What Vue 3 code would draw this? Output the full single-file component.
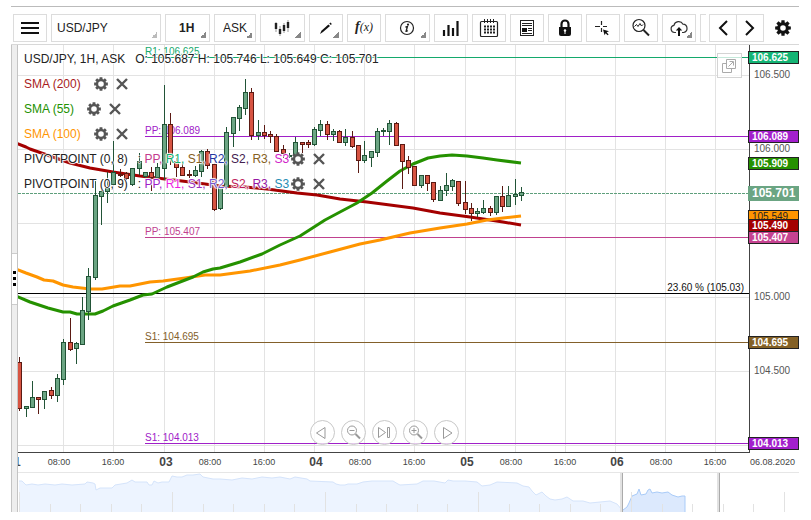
<script setup>
import { ref } from 'vue'

const pair = ref('USD/JPY')
const period = ref('1H')
const side = ref('ASK')

// Outline of a toothed wheel centred on 0,0 with a round hole
function gearPath(outer, inner, hole) {
  const pts = []
  for (let i = 0; i < 8; i++) {
    const a = (i * Math.PI) / 4
    const steps = [[-0.3, inner], [-0.2, outer], [0.2, outer], [0.3, inner]]
    for (const [d, r] of steps) {
      pts.push(`${(r * Math.sin(a + d)).toFixed(2)} ${(-r * Math.cos(a + d)).toFixed(2)}`)
    }
  }
  return `M${pts.join('L')}ZM${hole} 0A${hole} ${hole} 0 1 0 ${-hole} 0A${hole} ${hole} 0 1 0 ${hole} 0Z`
}
const bigGear = gearPath(8, 5.8, 2.8)
const smallGear = gearPath(7, 5.2, 2.8)

const indicators = [
  { name: 'SMA (200)', color: '#a81c1c' },
  { name: 'SMA (55)', color: '#229100' },
  { name: 'SMA (100)', color: '#ff9500' },
]
const pivots = [
  {
    name: 'PIVOTPOINT (0, 8)',
    parts: [['PP', '#c43b8e'], ['R1', '#12b070'], ['S1', '#856022'], ['R2', '#2536a0'], ['S2', '#43204f'], ['R3', '#856022'], ['S3', '#d020c8']],
  },
  {
    name: 'PIVOTPOINT (0, 9)',
    parts: [['PP', '#9f1fc8'], ['R1', '#ee1fe2'], ['S1', '#9b2fc0'], ['R2', '#7458cc'], ['S2', '#c01c5c'], ['R3', '#9618a4'], ['S3', '#1f8cb4']],
  },
]

const gridX = [63, 113, 164, 214, 264, 314, 364, 414, 465, 515, 565, 615, 665, 715]
const gridY = [75, 149, 223, 297, 371, 445]

const levels = [
  { y: 57, color: '#14a96c', label: 'R1: 106.625' },
  { y: 136, color: '#a020c8', label: 'PP: 106.089' },
  { y: 237, color: '#c0418f', label: 'PP: 105.407' },
  { y: 342, color: '#83602a', label: 'S1: 104.695' },
  { y: 443, color: '#a020c8', label: 'S1: 104.013' },
]
const priceTicks = [[75, '106.500'], [149, '106.000'], [297, '105.000'], [371, '104.500']]
const tags = [
  { y: 51, text: '106.625', fill: '#14b474', ink: '#fff' },
  { y: 130, text: '106.089', fill: '#a21fcc', ink: '#fff' },
  { y: 157, text: '105.909', fill: '#259100', ink: '#fff' },
  { y: 210, text: '105.549', fill: '#ff9500', ink: '#222', plain: true },
  { y: 219, text: '105.490', fill: '#a40000', ink: '#fff' },
  { y: 231, text: '105.407', fill: '#c64391', ink: '#fff' },
  { y: 336, text: '104.695', fill: '#846126', ink: '#fff' },
  { y: 437, text: '104.013', fill: '#a21fcc', ink: '#fff' },
]
const days = [[14, '31'], [166, '03'], [316, '04'], [467, '05'], [617, '06']]
const hours = [
  [59, '08:00'], [113, '16:00'], [210, '08:00'], [264, '16:00'], [360, '08:00'],
  [414, '16:00'], [511, '08:00'], [565, '16:00'], [661, '08:00'], [715, '16:00'],
]

const sma200 = '16,143 26,147 30,149 50,156 70,163 90,168 113,172 140,176 165,179 190,182 220,186 245,187 267,189 297,193 317,195 340,199 367,202 390,205 413,208 440,213 470,217 490,220 503,222 521,225'
const sma55 = '16,296 30,302 48,308 63,312 70,312 77,314 95,314 103,311 113,306 130,300 143,295 152,294 167,287 193,277 203,272 213,269 220,268 240,262 262,254 280,245 300,236 325,220 340,212 357,203 372,193 387,181 400,171 413,164 428,158 440,156 452,155 467,156 483,158 497,160 521,163'
const sma100 = '16,269 26,273 37,277 44,280 53,281 63,285 73,287 90,289 102,289 120,286 130,286 150,282 163,281 185,278 205,275 220,275 250,271 280,265 300,260 330,252 360,244 380,240 410,233 440,228 467,224 487,220 503,218 521,216'

// x, high, low, body top, body bottom, rising
const candles = [
  [19, 357, 411, 362, 409, 0], [26, 406, 417, 406, 409, 1], [32, 381, 408, 397, 408, 1],
  [38, 397, 414, 397, 400, 0], [44, 391, 409, 391, 400, 1], [51, 387, 399, 390, 396, 0],
  [57, 374, 402, 378, 396, 1], [63, 339, 385, 342, 380, 1], [70, 318, 351, 342, 350, 0],
  [76, 342, 364, 343, 349, 1], [82, 297, 345, 310, 345, 1], [88, 268, 320, 276, 312, 1],
  [95, 181, 280, 195, 278, 1], [101, 188, 225, 191, 197, 1], [107, 172, 203, 188, 192, 1],
  [113, 141, 185, 172, 185, 1], [120, 169, 177, 174, 176, 0], [126, 172, 180, 173, 179, 0],
  [132, 168, 186, 168, 185, 1], [139, 153, 175, 161, 169, 1], [145, 172, 178, 172, 177, 1],
  [151, 167, 191, 172, 178, 0], [157, 163, 178, 167, 178, 1], [164, 85, 180, 124, 169, 1],
  [170, 113, 165, 124, 160, 0], [176, 158, 177, 161, 168, 0], [182, 162, 176, 167, 176, 0],
  [189, 170, 178, 174, 176, 0], [195, 166, 177, 170, 176, 1], [201, 150, 177, 151, 172, 1],
  [207, 149, 169, 151, 166, 0], [214, 164, 211, 164, 210, 0], [220, 187, 210, 187, 209, 1],
  [226, 127, 189, 132, 187, 1], [233, 117, 147, 117, 134, 1], [239, 105, 131, 107, 119, 1],
  [245, 79, 115, 92, 109, 1], [251, 88, 140, 92, 136, 0], [258, 120, 140, 132, 136, 1],
  [264, 125, 139, 132, 136, 0], [270, 131, 143, 134, 137, 0], [276, 134, 152, 136, 152, 0],
  [283, 145, 158, 149, 154, 0], [289, 153, 158, 155, 157, 1], [295, 137, 156, 142, 156, 1],
  [302, 142, 153, 142, 145, 0], [308, 140, 148, 142, 145, 0], [314, 127, 146, 129, 145, 1],
  [320, 120, 136, 124, 131, 1], [327, 121, 140, 124, 135, 0], [333, 129, 141, 131, 135, 1],
  [339, 130, 143, 131, 143, 0], [345, 129, 146, 137, 143, 1], [352, 131, 148, 137, 147, 0],
  [358, 145, 173, 145, 161, 0], [364, 141, 163, 155, 161, 1], [371, 151, 167, 151, 158, 1],
  [377, 128, 157, 131, 153, 1], [383, 128, 136, 130, 132, 1], [389, 120, 145, 123, 132, 1],
  [396, 122, 146, 123, 146, 0], [402, 144, 189, 144, 162, 0], [408, 156, 174, 160, 168, 0],
  [414, 166, 186, 166, 186, 0], [421, 175, 188, 175, 186, 1], [427, 175, 191, 175, 184, 0],
  [433, 182, 202, 182, 200, 0], [440, 186, 201, 190, 201, 1], [446, 173, 196, 185, 191, 1],
  [452, 179, 191, 180, 187, 1], [458, 181, 206, 181, 204, 0], [465, 181, 214, 202, 210, 0],
  [471, 203, 221, 208, 214, 0], [477, 208, 217, 211, 214, 1], [483, 200, 214, 208, 213, 1],
  [490, 206, 216, 208, 213, 0], [496, 196, 215, 196, 213, 1], [502, 186, 212, 196, 207, 0],
  [508, 186, 207, 195, 207, 1], [515, 179, 205, 194, 197, 1], [521, 187, 201, 192, 196, 1],
]

const past = '19,481 22,481 24,483 26,485 32,484 38,485 45,484 55,485 62,484 72,485 85,484 87,482 93,483 95,484 96,490 100,488 112,488 115,485 121,484 127,483 132,480 135,482 147,482 149,485 152,485 154,481 158,483 162,482 169,482 172,476 177,477 182,477 187,475 193,475 200,474 203,477 213,479 220,479 232,480 242,478 252,479 262,477 272,478 280,477 290,479 295,477 307,479 310,481 333,482 336,484 340,485 345,485 348,484 357,484 363,482 372,481 393,481 398,484 400,485 417,484 423,481 434,481 445,483 448,480 453,481 465,481 477,482 482,486 490,485 497,482 517,483 523,486 529,487 532,491 536,495 542,492 546,496 550,499 555,500 562,499 567,497 573,501 583,501 590,503 600,502 610,501 617,504 622,510'
const recent = '623,510 627,507 629,503 632,496 637,494 639,489 641,495 646,494 648,490 650,489 652,493 657,492 662,493 668,492 672,495 678,497 682,496 685,496'
const ticks = Array.from({ length: 26 }, (_, i) => ({ x: Math.round(19 + i * 30.6), tall: i % 5 === 0 }))
</script>

<template>
  <main class="app">
    <header class="toolbar">
      <div class="tools">
        <button class="tool" type="button" aria-label="Menu">
          <svg width="18" height="14" viewBox="0 0 18 14"><path d="M0 2h18M0 7h18M0 12h18" stroke="#111" stroke-width="2" /></svg>
        </button>
        <label class="pick pair">
          <select v-model="pair" aria-label="Instrument"><option>USD/JPY</option></select>
          <i class="corner pale"></i>
        </label>
        <label class="pick period">
          <select v-model="period" aria-label="Period"><option>1H</option></select>
          <i class="corner"></i>
        </label>
        <label class="pick side">
          <select v-model="side" aria-label="Price side"><option>ASK</option></select>
          <i class="corner"></i>
        </label>
        <button class="tool wide" type="button" aria-label="Chart type">
          <svg width="18" height="18" viewBox="0 0 18 18">
            <path d="M3 3v10M7 7v10M11 4v10M15 1v12" stroke="#999" />
            <path d="M3 4v6M7 10v5M11 6v6M15 3v6" stroke="#222" stroke-width="2.4" />
          </svg>
          <i class="corner"></i>
        </button>
        <button class="tool" type="button" aria-label="Draw">
          <svg width="14" height="14" viewBox="0 0 14 14">
            <path d="M1 13l1.400-3.200L9.400 3.400l1.600 1.600-7 6z" fill="#111" /><path d="M10.300 2.600l1.200-1 1.300 1.300-1 1.200z" fill="#111" />
          </svg>
          <i class="corner"></i>
        </button>
        <button class="tool fx" type="button" aria-label="Indicators"><b>f</b><span>(x)</span></button>
        <button class="tool wide" type="button" aria-label="Information">
          <svg width="16" height="16" viewBox="0 0 16 16">
            <circle cx="8" cy="8" r="6.5" fill="none" stroke="#222" stroke-width="1.2" />
            <circle cx="9" cy="4.6" r="1.1" fill="#222" />
            <path d="M6.400 7.100l2-.6-1.300 4.800q.5.3 1.600-.8" fill="none" stroke="#222" stroke-width="1.4" />
          </svg>
          <i class="corner"></i>
        </button>
        <button class="tool" type="button" aria-label="Statistics">
          <svg width="18" height="18" viewBox="0 0 18 18"><path d="M2 17v-6M6.500 17v-11M11 17v-8M15.500 17v-15" stroke="#111" stroke-width="2.2" /></svg>
        </button>
        <button class="tool" type="button" aria-label="Calendar">
          <svg width="20" height="20" viewBox="0 0 20 20">
            <rect x="1.500" y="3.500" width="17" height="15" rx="1" fill="none" stroke="#222" stroke-width="1.2" />
            <path d="M5.500 1v4M8.500 1v4M11.500 1v4M14.500 1v4" stroke="#222" />
            <path d="M5 8.500h11M5 11.500h11M5 14.500h11" stroke="#222" stroke-width="2" stroke-dasharray="2 1" />
          </svg>
        </button>
        <button class="tool" type="button" aria-label="News">
          <svg width="16" height="16" viewBox="0 0 16 16">
            <rect x="1.500" y=".5" width="13" height="15" fill="none" stroke="#222" />
            <path d="M3 3.500h10M3 5.500h10M9 8.500h4M9 10.500h4M3 13.500h10" stroke="#222" />
            <rect x="3" y="8" width="5" height="4" fill="#111" />
          </svg>
        </button>
        <button class="tool" type="button" aria-label="Lock">
          <svg width="16" height="18" viewBox="0 0 16 18">
            <path d="M4.500 8V5a3.500 3.500 0 0 1 7 0v3" fill="none" stroke="#111" stroke-width="2.200" />
            <path d="M2 8h12v7q0 2-2 2H4q-2 0-2-2z" fill="#111" />
            <circle cx="8" cy="11.500" r="1.200" fill="#fff" /><path d="M8 12v3" stroke="#fff" />
          </svg>
        </button>
        <button class="tool" type="button" aria-label="Crosshair">
          <svg width="18" height="18" viewBox="0 0 18 18">
            <path d="M1 7.500h5M9 7.500h4M7.500 2v4M7.500 9v4" stroke="#222" stroke-width="1.200" />
            <path d="M9 10.500l6 1.700-2.400 1 2 2.200-1 .8-2-2-1 2z" fill="#111" />
          </svg>
        </button>
        <button class="tool" type="button" aria-label="Analyse">
          <svg width="20" height="20" viewBox="0 0 20 20">
            <circle cx="8" cy="7.500" r="6" fill="none" stroke="#222" stroke-width="1.200" />
            <path d="M3.500 8.500l2-2 1.500 2 2-3 1.500 2.500 1.500-1.500" fill="none" stroke="#222" />
            <path d="M12.500 12l5.500 5.500" stroke="#222" stroke-width="2" />
          </svg>
        </button>
        <button class="tool" type="button" aria-label="Upload">
          <svg width="18" height="18" viewBox="0 0 18 18">
            <path d="M6 13.500H4.500a3.600 3.600 0 0 1-.6-7.100A4.900 4.900 0 0 1 13 5.200a4.200 4.200 0 0 1 .7 8.300H12" fill="none" stroke="#333" stroke-width="1.200" />
            <path d="M9 17V9" stroke="#111" stroke-width="2" /><path d="M5.800 11.500L9 8l3.200 3.500z" fill="#111" />
          </svg>
          <i class="corner"></i>
        </button>
        <button class="tool" type="button" aria-label="More tools"></button>
      </div>
      <nav class="pager">
        <button class="tool" type="button" aria-label="Previous tools">
          <svg width="10" height="16" viewBox="0 0 10 16"><path d="M9 1L2 8l7 7" fill="none" stroke="#111" stroke-width="2" /></svg>
        </button>
        <button class="tool" type="button" aria-label="Next tools">
          <svg width="10" height="16" viewBox="0 0 10 16"><path d="M1 1l7 7-7 7" fill="none" stroke="#111" stroke-width="2" /></svg>
        </button>
      </nav>
      <button class="settings" type="button" aria-label="Settings">
        <svg width="16" height="16" viewBox="-8 -8 16 16"><path :d="bigGear" fill="#111" fill-rule="evenodd" /></svg>
      </button>
    </header>

    <div class="body">
      <aside class="rail">
        <button class="grip" type="button" aria-label="Resize panel"><i></i><i></i><i></i></button>
      </aside>

      <section class="stage">
        <div class="chart">
          <svg class="plot" viewBox="18 45 781 427" role="img" aria-label="USD/JPY hourly candles">
            <g class="crisp">
              <path v-for="x in gridX" :key="'x' + x" :d="`M${x + 0.5} 45V452`" stroke="#e3e3e3" />
              <path v-for="y in gridY" :key="'y' + y" :d="`M18 ${y + 0.5}H749`" stroke="#e3e3e3" />
              <path d="M18 193.500H749" stroke="#5f9f7c" stroke-dasharray="3 1" />
              <path d="M18 293.500H749" stroke="#000" />
              <path v-for="l in levels" :key="l.label" :d="`M145 ${l.y + 0.5}H749`" :stroke="l.color" />
            </g>
            <text v-for="l in levels" :key="'t' + l.label" x="145" :y="l.y - 2" :fill="l.color">{{ l.label }}</text>
            <text x="744" y="291" text-anchor="end" fill="#111">23.60 % (105.03)</text>

            <g fill="none" stroke-width="3" stroke-linejoin="round">
              <polyline :points="sma200" stroke="#a40000" />
              <polyline :points="sma100" stroke="#ff9500" />
              <polyline :points="sma55" stroke="#259100" />
            </g>

            <g v-for="c in candles" :key="c[0]" class="crisp" :class="c[5] ? 'up' : 'down'">
              <path :d="`M${c[0] + 0.5} ${c[1]}V${c[2]}`" />
              <rect :x="c[0] - 1.5" :y="c[3] + 0.5" width="4" :height="c[4] - c[3] - 1" />
            </g>

            <path class="crisp" d="M18 452.500H749.500V45" fill="none" stroke="#444" />
            <text v-for="t in priceTicks" :key="t[1]" x="754" :y="t[0] + 3" fill="#555">{{ t[1] }}</text>
            <g v-for="t in tags" :key="t.y">
              <rect class="crisp" x="748.500" :y="t.y + 0.5" width="50" height="12" :fill="t.fill" stroke="#222" />
              <text x="752" :y="t.y + 10" :fill="t.ink" :class="{ strong: !t.plain }">{{ t.text }}</text>
            </g>
            <rect x="748" y="186" width="51" height="15" fill="#6ba583" />
            <text class="day" x="752" y="197" fill="#fff">105.701</text>

            <text v-for="d in days" :key="d[0]" class="day" :x="d[0]" y="466" text-anchor="middle" fill="#444">{{ d[1] }}</text>
            <text v-for="h in hours" :key="h[0]" class="hour" :x="h[0]" y="465" text-anchor="middle" fill="#444">{{ h[1] }}</text>
            <text class="hour" x="750" y="465" fill="#444">06.08.2020</text>
          </svg>

          <div class="legend">
            <p class="row"><span>USD/JPY, 1H, ASK</span><span>O: 105.687 H: 105.746 L: 105.649 C: 105.701</span></p>
            <p v-for="s in indicators" :key="s.name" class="row">
              <span class="name" :style="{ color: s.color }">{{ s.name }}</span>
              <button type="button" :aria-label="`Edit ${s.name}`"><svg width="14" height="14" viewBox="-7 -7 14 14"><path :d="smallGear" fill="#555" fill-rule="evenodd" /></svg></button>
              <button type="button" :aria-label="`Remove ${s.name}`"><svg width="12" height="12" viewBox="0 0 12 12"><path d="M1 1l10 10M11 1L1 11" stroke="#555" stroke-width="2.400" /></svg></button>
            </p>
            <p v-for="p in pivots" :key="p.name" class="row pivot">
              <span>{{ p.name }}</span>
              <span class="parts">: <template v-for="(t, i) in p.parts" :key="t[0]"><span :style="{ color: t[1] }">{{ t[0] }}{{ i < 6 ? ', ' : '' }}</span></template></span>
              <button type="button" :aria-label="`Edit ${p.name}`"><svg width="14" height="14" viewBox="-7 -7 14 14"><path :d="smallGear" fill="#555" fill-rule="evenodd" /></svg></button>
              <button type="button" :aria-label="`Remove ${p.name}`"><svg width="12" height="12" viewBox="0 0 12 12"><path d="M1 1l10 10M11 1L1 11" stroke="#555" stroke-width="2.400" /></svg></button>
            </p>
          </div>

          <div class="over corner-box">
            <button type="button" aria-label="Open in new window">
              <svg width="14" height="14" viewBox="0 0 14 14" fill="none" stroke="#aaa">
                <path d="M4.500.5h9v9h-9zM4 4.500H.5v9h9V10" /><path d="M6.500 7.500l4.500-4.500M7.500 2.500h4v4" />
              </svg>
            </button>
          </div>

          <div class="over zoomer">
            <button type="button" aria-label="Scroll back"><svg viewBox="0 0 23 23"><path d="M14 6.500v11L5.500 12z" /></svg></button>
            <button type="button" aria-label="Zoom out"><svg viewBox="0 0 23 23"><circle cx="10" cy="9.500" r="4.500" /><path d="M7.500 9.500h5" /><path class="thick" d="M13.500 13l4.500 4.500" /></svg></button>
            <button type="button" aria-label="Jump to latest"><svg viewBox="0 0 23 23"><path d="M5.500 6.500v10l7-5zM14.500 6.500h2v10h-2z" /></svg></button>
            <button type="button" aria-label="Zoom in"><svg viewBox="0 0 23 23"><circle cx="10" cy="9.500" r="4.500" /><path d="M7.500 9.500h5M10 7v5" /><path class="thick" d="M13.500 13l4.500 4.500" /></svg></button>
            <button type="button" aria-label="Scroll forward"><svg viewBox="0 0 23 23"><path d="M8.500 6.500v11L17 12z" /></svg></button>
          </div>
        </div>

        <svg class="plot" viewBox="18 472 781 40" role="img" aria-label="Overview">
          <polygon :points="`19,512 ${past} 622,512`" fill="#edf4ff" />
          <polyline :points="past" fill="none" stroke="#d5e4fb" stroke-width="1" />
          <polygon :points="`623,512 ${recent} 685,512`" fill="#dce9fd" />
          <polyline :points="`${recent} 685,512`" fill="none" stroke="#a9cbf8" stroke-width="1" />
          <g class="crisp">
            <path v-for="t in ticks" :key="t.x" :d="`M${t.x + 0.5} ${t.tall ? 492 : 504}V512`" stroke="#e2e2e2" />
            <path d="M18 472.500H799" stroke="#e6e6e6" />
            <path d="M621 473V512M718 473V512" stroke="#e2e2e2" stroke-width="2" />
            <path d="M622.500 473V512M719.500 473V512" stroke="#aaa" />
          </g>
        </svg>
      </section>
    </div>
  </main>
</template>

<style>
body {
  background: #fff;
}
</style>

<style scoped>
.app {
  padding: 6px 12px 0 11px;
  font-family: "Liberation Sans", Arial, sans-serif;
  font-size: 12px;
  color: #222;
}
.toolbar {
  display: flex;
  padding: 7px 0 2px 2px;
  border-top: 1px solid #bbb;
  border-bottom: 1px solid #d8d8d8;
}
.tools {
  display: flex;
  flex: 1;
  gap: 4px;
  min-width: 0;
  overflow: hidden;
}
button {
  display: flex;
  align-items: center;
  justify-content: center;
  padding: 0;
  border: 0;
  background: none;
  font: inherit;
  color: inherit;
  cursor: pointer;
}
.tool,
.pick {
  position: relative;
  flex: none;
  box-sizing: border-box;
  width: 34px;
  height: 28px;
  border: 1px solid #dcdcdc;
  background: #fff;
}
.wide {
  width: 45px;
  padding-right: 2px;
}
.pair {
  width: 110px;
}
.period {
  width: 45px;
}
.side {
  width: 42px;
}
select {
  appearance: none;
  width: 100%;
  height: 100%;
  padding: 0 0 0 5px;
  border: 0;
  background: none;
  font: inherit;
  color: #222;
}
.period select {
  padding-left: 13px;
  font-weight: bold;
}
.side select {
  padding-left: 8px;
}
.corner {
  position: absolute;
  right: 3px;
  bottom: 3px;
  width: 6px;
  height: 6px;
  background: linear-gradient(135deg, transparent 50%, #888 50%);
  pointer-events: none;
}
.pale {
  background: linear-gradient(135deg, transparent 50%, #bbb 50%);
}
.fx {
  align-items: baseline;
  font: italic 12px/24px "Liberation Serif", "Times New Roman", serif;
}
.fx b {
  font-size: 14px;
}
.pager {
  display: flex;
  margin-left: 3px;
}
.pager .tool {
  width: 28px;
}
.pager .tool + .tool {
  margin-left: -1px;
}
.settings {
  width: 35px;
  padding-left: 3px;
}
.body {
  display: flex;
}
.rail {
  display: flex;
  align-items: center;
  flex: none;
  box-sizing: border-box;
  width: 7px;
  border: solid #c4c4c4;
  border-width: 0 1px;
  background: #eee;
}
.grip {
  flex-direction: column;
  gap: 3px;
  width: 100%;
  height: 52px;
  border: solid #ccc;
  border-width: 1px 0;
  background: #fff;
}
.grip i {
  width: 3px;
  height: 3px;
  background: #000;
}
.stage {
  flex: 1;
  min-width: 0;
}
.chart {
  position: relative;
}
.plot {
  display: block;
  width: 100%;
  font-size: 10px;
}
.crisp {
  shape-rendering: crispEdges;
}
.strong {
  font-weight: bold;
}
.day {
  font-size: 12px;
  font-weight: bold;
}
.hour {
  font-size: 9px;
}
.up {
  fill: #6ba583;
  stroke: #225437;
}
.down {
  fill: #d75442;
  stroke: #5b1a13;
}
.legend {
  position: absolute;
  top: 1px;
  left: 6px;
  text-shadow: 0 0 1px #fff, 1px 0 1px #fff, -1px 0 1px #fff, 0 1px 1px #fff, 0 -1px 1px #fff;
}
.row {
  display: flex;
  align-items: center;
  gap: 8px;
  height: 25px;
  margin: 0;
  white-space: pre;
}
.row > span + span {
  margin-left: 2px;
}
.row .name {
  margin-right: 5px;
}
.pivot button:first-of-type {
  margin-left: -6px;
}
.over {
  position: absolute;
  left: 0;
  display: flex;
  box-sizing: border-box;
  width: 93.8%;
  pointer-events: none;
}
.over button {
  box-sizing: border-box;
  width: 25px;
  height: 25px;
  border: 1px solid #d4d4d4;
  background: rgba(255, 255, 255, 0.75);
  pointer-events: auto;
}
.corner-box {
  top: 8px;
  justify-content: flex-end;
  padding-right: 9px;
}
.zoomer {
  bottom: 27px;
  justify-content: center;
  gap: 6px;
}
.zoomer button {
  border-color: #c8c8c8;
  border-radius: 50%;
}
.zoomer svg {
  width: 23px;
  height: 23px;
  fill: none;
  stroke: #999;
}
.zoomer .thick {
  stroke-width: 2;
}
</style>
